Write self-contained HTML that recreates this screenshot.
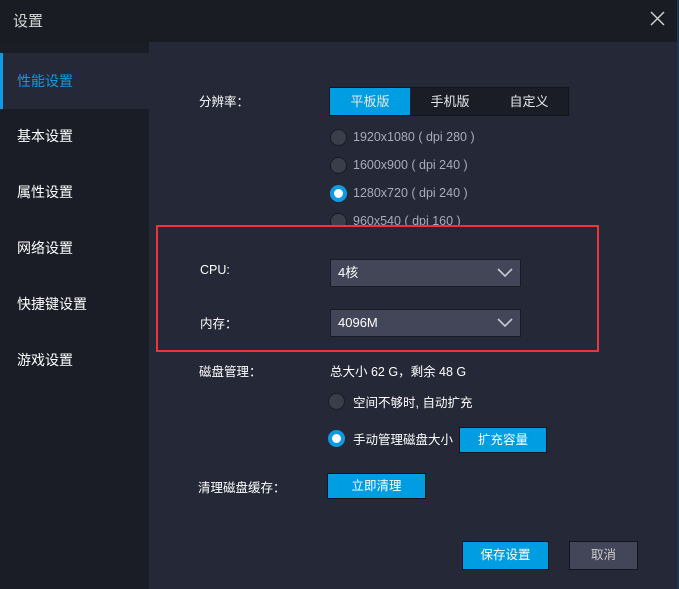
<!DOCTYPE html>
<html><head><meta charset="utf-8"><style>
*{margin:0;padding:0;box-sizing:border-box}
body{width:679px;height:589px;background:#252836;position:relative;overflow:hidden;font-family:"Liberation Sans","Noto Sans CJK SC",sans-serif;font-size:13px;color:#e6e8ee}
.a{position:absolute}
.hdr{left:0;top:0;width:679px;height:42px;background:#1a1c24}
.side{left:0;top:42px;width:149px;height:547px;background:#1b1d26}
.nav{left:0;width:149px;height:56px;line-height:56px;padding-left:17px;font-size:14px;color:#fff}
.lbl{font-size:12.5px;color:#fff}
.rad{width:17px;height:17px;border-radius:50%;background:#3a3d4a;border:1px solid #1a1c24}
.rad.on{background:#fff;border:4px solid #0e9be3}
.rt{font-size:12.5px;color:#a9acb8}
.sel{left:330px;width:191px;height:28px;background:#434659;border:1px solid #1a1c24;padding-left:7px;line-height:26px;font-size:13px;color:#fff}
.btn{background:#009de3;border:1px solid #121420;color:#fff;text-align:center;font-size:12.5px}
</style></head><body>
<div class="a hdr"></div>
<div class="a" style="left:13px;top:10px;font-size:15px;color:#d8d8d8">设置</div>
<svg class="a" style="left:650px;top:11px" width="15" height="15"><path d="M1 1L14 14M14 1L1 14" stroke="#cfcfcf" stroke-width="1.5"/></svg>
<div class="a side"></div>
<div class="a nav" style="top:53px;background:#252836;color:#0e9be3;border-left:3px solid #0e9be3;padding-left:14px">性能设置</div>
<div class="a nav" style="top:108px">基本设置</div>
<div class="a nav" style="top:164px">属性设置</div>
<div class="a nav" style="top:220px">网络设置</div>
<div class="a nav" style="top:276px">快捷键设置</div>
<div class="a nav" style="top:332px">游戏设置</div>

<div class="a lbl" style="left:199px;top:91px">分辨率：</div>
<div class="a" style="left:329px;top:87px;width:240px;height:29px;background:#1b1d26;border:1px solid #121420;display:flex">
<div style="width:80px;background:#009de3;text-align:center;line-height:27px">平板版</div>
<div style="width:80px;text-align:center;line-height:27px">手机版</div>
<div style="width:78px;text-align:center;line-height:27px">自定义</div></div>
<div class="a rad" style="left:330px;top:129px"></div><div class="a rt" style="left:353px;top:130px">1920x1080 ( dpi 280 )</div>
<div class="a rad" style="left:330px;top:157px"></div><div class="a rt" style="left:353px;top:158px">1600x900 ( dpi 240 )</div>
<div class="a rad on" style="left:330px;top:185px"></div><div class="a rt" style="left:353px;top:186px">1280x720 ( dpi 240 )</div>
<div class="a" style="left:300px;top:209px;width:200px;height:17px;overflow:hidden"><div class="a rad" style="left:30px;top:4px"></div><div class="a rt" style="left:53px;top:5px">960x540 ( dpi 160 )</div></div>
<div class="a" style="left:156px;top:225px;width:443px;height:127px;border:2px solid #f0333a"></div>
<div class="a lbl" style="left:200px;top:263px">CPU:</div>
<div class="a sel" style="top:259px">4核<svg class="a" style="right:7px;top:8px" width="16" height="10"><path d="M1 1L8 8L15 1" fill="none" stroke="#c8cad2" stroke-width="1.6"/></svg></div>
<div class="a lbl" style="left:200px;top:313px">内存：</div>
<div class="a sel" style="top:309px">4096M<svg class="a" style="right:7px;top:8px" width="16" height="10"><path d="M1 1L8 8L15 1" fill="none" stroke="#c8cad2" stroke-width="1.6"/></svg></div>

<div class="a lbl" style="left:199px;top:361px">磁盘管理：</div>
<div class="a lbl" style="left:330px;top:361px">总大小 62 G，剩余 48 G</div>
<div class="a rad" style="left:328px;top:393px"></div><div class="a lbl" style="left:353px;top:392px">空间不够时, 自动扩充</div>
<div class="a rad on" style="left:328px;top:430px"></div><div class="a lbl" style="left:353px;top:429px">手动管理磁盘大小</div>
<div class="a btn" style="left:459px;top:427px;width:88px;height:26px;line-height:24px">扩充容量</div>
<div class="a lbl" style="left:198px;top:477px">清理磁盘缓存：</div>
<div class="a btn" style="left:327px;top:473px;width:99px;height:26px;line-height:24px">立即清理</div>
<div class="a btn" style="left:462px;top:541px;width:87px;height:29px;line-height:27px">保存设置</div>
<div class="a btn" style="left:569px;top:541px;width:69px;height:29px;line-height:27px;background:#434659;color:#ccc">取消</div>
<div class="a" style="left:677px;top:0;width:2px;height:589px;background:#1e3550"></div>
</body></html>
